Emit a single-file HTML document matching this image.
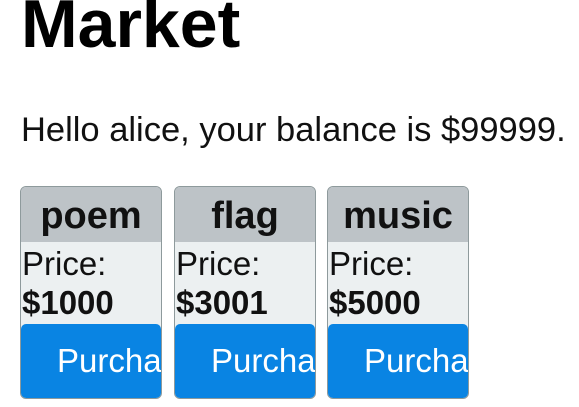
<!DOCTYPE html>
<html><head><style>
body{margin:0;width:579px;height:407px;overflow:hidden;background:#fff;font-family:"Liberation Sans",Arial,sans-serif;position:relative}
.t{position:absolute;left:21px;top:-10px;font-size:68px;font-weight:bold;margin:0;line-height:1;white-space:nowrap}
.h{position:absolute;left:21px;top:110px;font-size:34.5px;line-height:40px;white-space:nowrap;color:#111}
.c{position:absolute;top:186px;width:140px;height:211px;border:1px solid #8e9a9c;border-radius:6px;background:#ecf0f1;overflow:hidden}
.hd{height:55px;background:#bdc3c7;text-align:center;font-weight:bold;font-size:38px;line-height:58px;color:#111}
.b{font-size:33px;line-height:39px;padding-left:1px;padding-top:2px;color:#111;white-space:nowrap}
.b b{display:block}
.btn{position:absolute;left:0;top:137px;width:140px;height:75px;background:#0984e3;border-radius:5px 5px 0 0;color:#fff;font-size:33px;line-height:74px;padding-left:36px;box-sizing:border-box;white-space:nowrap;overflow:hidden}
</style></head><body>
<h1 class="t">Market</h1>
<div class="h">Hello alice, your balance is $99999.</div>
<div class="c" style="left:20px"><div class="hd">poem</div><div class="b">Price:<b>$1000</b></div><div class="btn">Purchase</div></div>
<div class="c" style="left:174px"><div class="hd">flag</div><div class="b">Price:<b>$3001</b></div><div class="btn">Purchase</div></div>
<div class="c" style="left:327px"><div class="hd">music</div><div class="b">Price:<b>$5000</b></div><div class="btn">Purchase</div></div>
</body></html>
